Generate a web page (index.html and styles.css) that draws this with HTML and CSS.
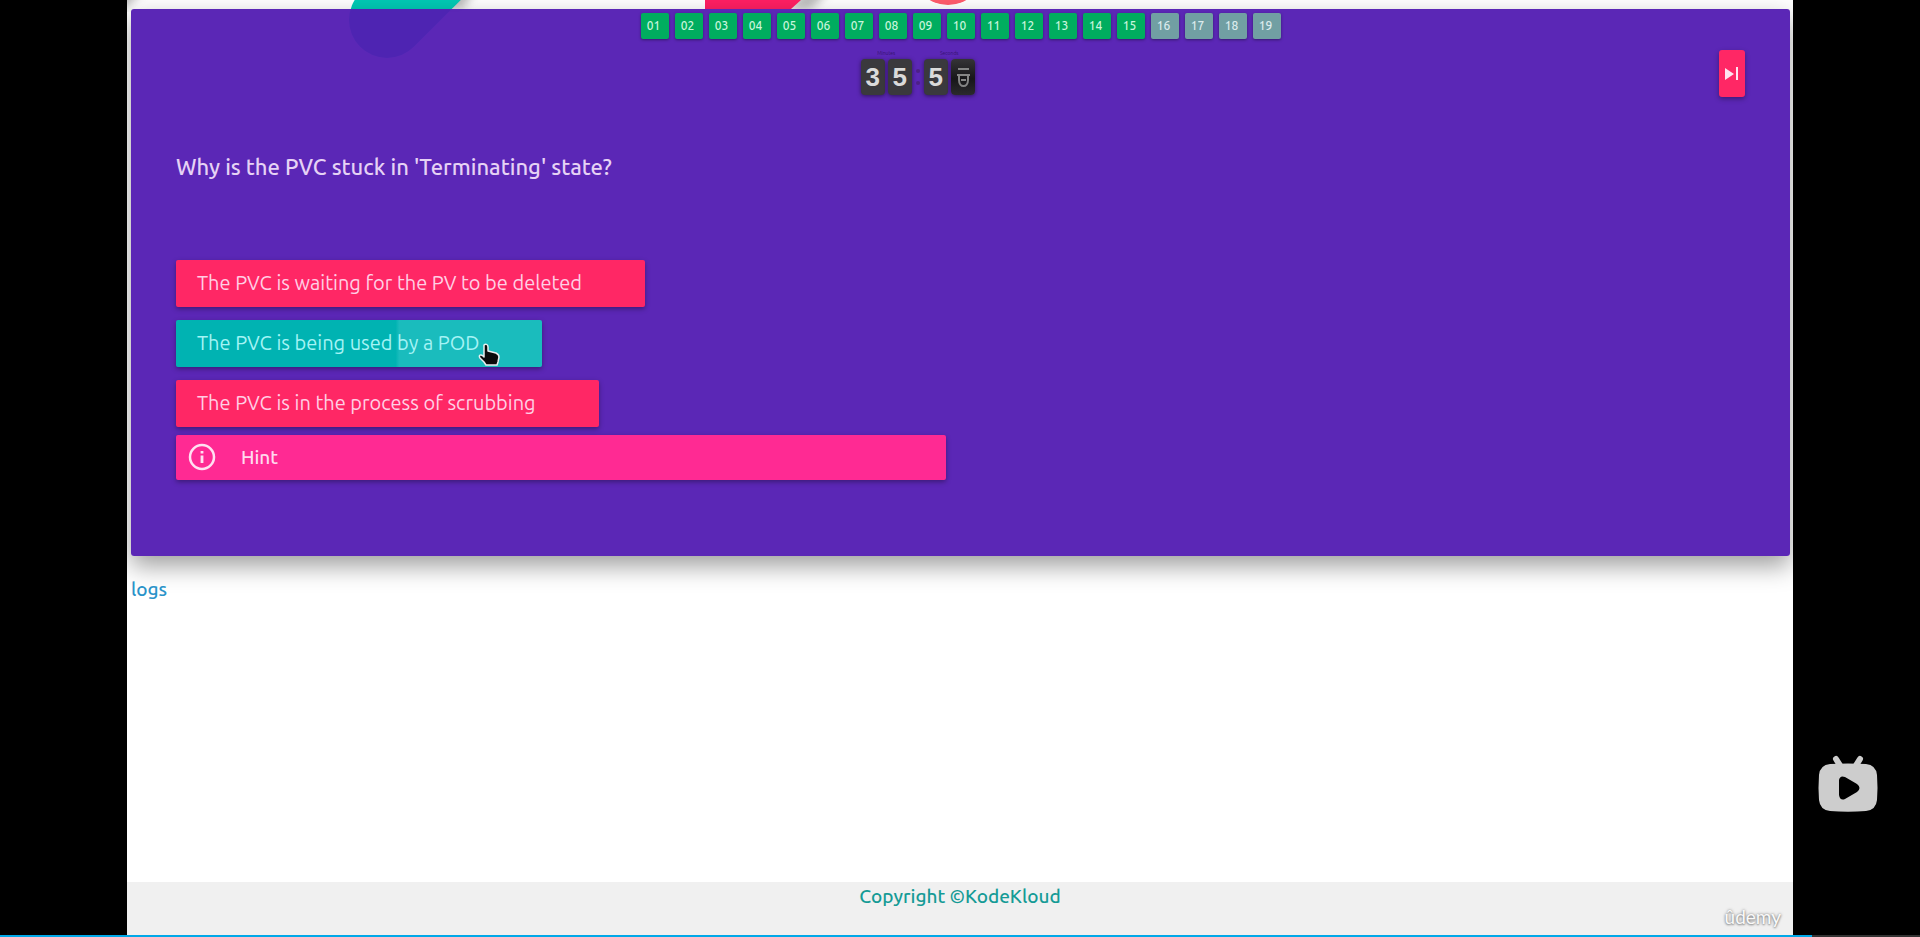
FILE: index.html
```html
<!DOCTYPE html>
<html lang="en">
<head>
<meta charset="utf-8">
<title>KodeKloud Quiz</title>
<link rel="stylesheet" href="styles.css">
</head>
<body>
<div class="player">
  <div class="page">
    <svg class="artwork" width="1200" height="60" viewBox="0 0 1200 60" aria-hidden="true">
      <defs><filter id="soft"><feGaussianBlur stdDeviation="5"/></filter></defs>
      <g filter="url(#soft)" fill="#8c8c8c" opacity=".6">
        <path d="M310 9 330-20h25L335 9z"/>
        <path d="M660 9 690-20h22L684 9z"/>
        <path d="M-10-12h28L-2 9h-8z"/>
      </g>
      <path d="M260 20 320-40" stroke="#00c9b4" stroke-width="76" stroke-linecap="round"/>
      <path d="M578 0h96l-10 9h-86z" fill="#ff1f63"/>
      <circle cx="821" cy="-31" r="36" fill="#ff5c6c"/>
    </svg>
    <main class="content">
      <section class="card">
        <nav class="steps" aria-label="Questions">
          <button class="step">01</button><button class="step">02</button><button class="step">03</button><button class="step">04</button><button class="step">05</button><button class="step">06</button><button class="step">07</button><button class="step">08</button><button class="step">09</button><button class="step">10</button><button class="step">11</button><button class="step">12</button><button class="step">13</button><button class="step">14</button><button class="step">15</button><button class="step todo">16</button><button class="step todo">17</button><button class="step todo">18</button><button class="step todo">19</button>
        </nav>
        <div class="toolbar">
          <div class="timer">
            <div class="unit">
              <span class="unit-name">Minutes</span>
              <div class="digits"><span class="digit">3</span><span class="digit">5</span></div>
            </div>
            <div class="colon"><i></i><i></i></div>
            <div class="unit">
              <span class="unit-name">Seconds</span>
              <div class="digits"><span class="digit">5</span><span class="digit flipping"><svg width="16" height="24" viewBox="0 0 16 24" fill="none" stroke="#858585" stroke-width="2" role="img" aria-label="0"><path d="M3 4h11M2 10h13" stroke-width="2"/><path d="M4 11v4c0 8 9 8 9 0v-4M6 15h5"/></svg></span></div>
            </div>
          </div>
          <button class="skip" aria-label="Skip question">
            <svg width="14" height="14" viewBox="0 0 14 14" fill="#ffe3f0"><path d="M0 1v12l9-6zM11 0h2v13h-2z"/></svg>
          </button>
        </div>
        <h1 class="question">Why is the PVC stuck in 'Terminating' state?</h1>
        <div class="answers">
          <button class="answer">The PVC is waiting for the PV to be deleted</button>
          <button class="answer chosen">The PVC is being used by a POD
            <svg class="pointer" width="22" height="23" viewBox="0 0 22 23" aria-hidden="true"><path d="M6 2c2-2 4 0 4 2v4l8 2c2 1 3 2 3 4l-1 5-1 3H8l-2-3-4-4c-2-3 1-4 3-2l1 1z" fill="#0b0b0b" stroke="#e9eeee" stroke-width="1.5" stroke-linejoin="round"/></svg>
          </button>
          <button class="answer">The PVC is in the process of scrubbing</button>
        </div>
        <button class="hint">
          <svg width="28" height="28" viewBox="0 0 28 28" fill="none" stroke="#ffe0f2" aria-hidden="true"><circle cx="14" cy="14" r="12" stroke-width="2.5"/><path d="M14 12.500v7.500M14 8v2.600" stroke-width="2.800"/></svg>
          Hint
        </button>
      </section>
      <a class="logs" href="#logs">logs</a>
    </main>
    <footer class="footer">Copyright ©KodeKloud</footer>
    <span class="watermark">ûdemy</span>
  </div>
  <svg class="tv" width="60" height="58" viewBox="0 0 60 58" role="img" aria-label="Play">
    <path d="m18 4 5 8M42 4l-5 8" stroke="#cdcdcd" stroke-width="6" stroke-linecap="round"/>
    <path fill="#cdcdcd" fill-rule="evenodd" d="M12 9Q30 8 48 9 58 10 59 20 60 33 59 45 58 55 48 56 30 57.500 12 56 2 55 1 45 0 33 1 20 2 10 12 9zM21 25V40Q22 46 27 44L39 37Q44 33 39 29L27 22Q22 20 21 25z"/>
  </svg>
</div>
<div class="progress" role="progressbar" aria-label="Playback" aria-valuenow="94"><div class="played" style="width:94.4%"></div></div>
</body>
</html>
```
FILE: styles.css
```css
* { box-sizing: border-box; }
body {
  margin: 0;
  min-height: 100vh;
  display: flex;
  flex-direction: column;
  background: #000;
  font-family: Ubuntu, "Noto Sans", sans-serif;
}
button { border: 0; font-family: inherit; cursor: pointer; }
.player { flex: 1; display: flex; position: relative; padding: 0 127px; }
.page {
  flex: 1;
  display: flex;
  flex-direction: column;
  position: relative;
  overflow: hidden;
  background: #fff;
}
.artwork { position: absolute; left: 0; top: 0; }
.content { flex: 1; padding: 9px 3px 0 4px; position: relative; }
.card {
  padding: 4px 45px 76px;
  border-radius: 3px;
  background: rgba(82, 27, 178, .95);
  box-shadow: 0 10px 24px rgba(0, 0, 0, .38);
}
.steps { display: flex; justify-content: center; gap: 6px; }
.step {
  width: 28px;
  height: 26px;
  padding: 0 2px 2px 0;
  border-radius: 2px;
  background: #00ad5f;
  color: #c9f5dc;
  font-size: 12px;
  font-weight: 500;
  box-shadow: 0 1px 3px rgba(0, 0, 0, .4);
}
.step.todo { background: #719fa3; color: #dcebed; }
.toolbar { display: grid; grid-template-columns: 18fr 1fr; padding-top: 11px; }
.timer { display: flex; justify-content: center; padding-right: 3px; }
.unit { display: flex; flex-direction: column; align-items: center; }
.unit-name { color: #35136e; font-size: 5px; line-height: 7px; }
.digits { display: flex; gap: 3px; padding-top: 2px; }
.digit {
  display: grid;
  place-items: center;
  width: 24px;
  height: 36px;
  border-radius: 4px;
  background: #3a393d;
  color: #dadada;
  font: bold 26px/34px "Liberation Sans", sans-serif;
  box-shadow: 0 1px 4px rgba(0, 0, 0, .5);
}
.digit.flipping { background: linear-gradient(#353436, #171619 55%, #2b2a2d); }
.colon { display: flex; flex-direction: column; gap: 8px; padding: 19px 4px 0; }
.colon i { width: 4px; height: 4px; border-radius: 50%; background: #4c2086; }
.skip {
  justify-self: end;
  display: grid;
  place-items: center;
  width: 26px;
  height: 47px;
  padding: 0;
  border-radius: 3px;
  background: #ff2765;
  box-shadow: 0 2px 5px rgba(0, 0, 0, .35);
}
.question {
  margin: 54px 0 78px;
  color: #e6d2f5;
  font-size: 22px;
  font-weight: 500;
  line-height: 31px;
}
.answers { display: flex; flex-direction: column; align-items: flex-start; gap: 13px; }
.answer {
  position: relative;
  height: 47px;
  padding: 0 63px 2px 21px;
  border-radius: 2px;
  background: #ff2765;
  color: #ffcfe4;
  font-size: 20px;
  box-shadow: 0 2px 5px rgba(0, 0, 0, .35);
}
.answer.chosen { background: linear-gradient(90deg, #00b3b2 60%, #1abcbd 61%); color: #a5f3f5; }
.pointer { position: absolute; right: 42px; top: 23px; }
.hint {
  display: flex;
  align-items: center;
  gap: 25px;
  width: 49.1%;
  height: 45px;
  margin-top: 8px;
  padding: 0 12px 2px;
  border-radius: 2px;
  background: #ff2a93;
  color: #ffd9ee;
  font-size: 19px;
  font-weight: 500;
  box-shadow: 0 2px 5px rgba(0, 0, 0, .35);
}
.logs {
  display: inline-block;
  margin-top: 19px;
  color: #2a93c9;
  font-size: 19px;
  font-weight: 500;
  line-height: 28px;
  text-decoration: none;
}
.footer {
  height: 53px;
  background: #f0f0f0;
  color: #159b96;
  font-size: 19px;
  font-weight: 500;
  line-height: 28px;
  text-align: center;
}
.watermark {
  position: absolute;
  right: 12px;
  bottom: 6px;
  color: #fafafa;
  font: 19px/24px Lato, sans-serif;
  text-shadow: 0 0 3px #777, 0 1px 2px #999;
}
.tv { position: absolute; right: 42px; bottom: 122px; }
.progress { height: 2px; background: #333; }
.played { height: 100%; background: #00a8e8; }
```
